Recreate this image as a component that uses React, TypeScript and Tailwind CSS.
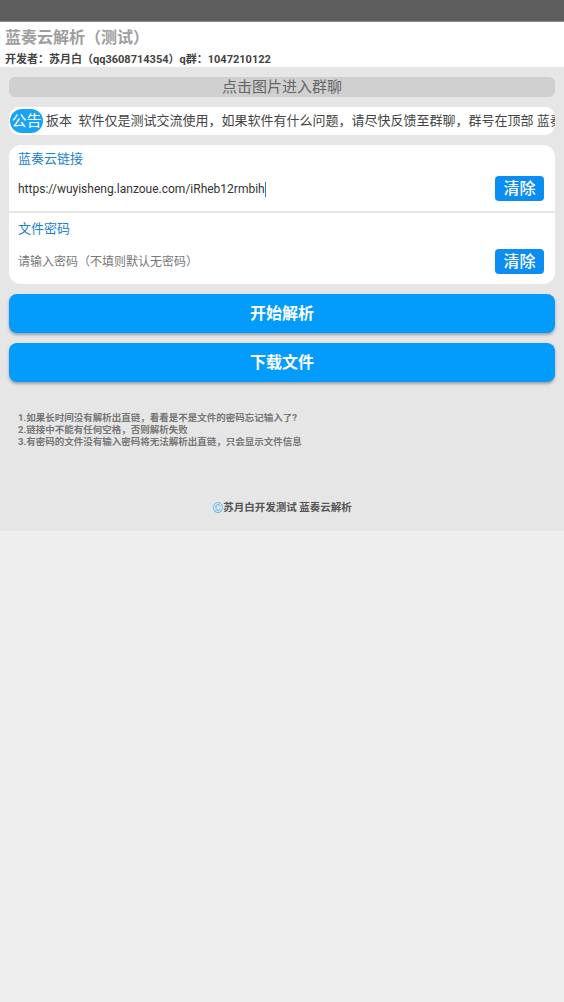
export default function App() {
  const font = { fontFamily: '"Roboto", "Noto Sans CJK SC", sans-serif' }
  return (
    <div className="min-h-[1002px] w-[564px] bg-[#eeeeee]" style={font}>
      {/* status bar */}
      <div className="h-[22px] bg-[#5e5e5e] border-b border-[#8a8a8a]" />

      {/* header */}
      <div className="bg-white px-[5px] pt-[5px]">
        <div className="text-[16px] leading-[22px] font-bold text-[#9e9e9e]">蓝奏云解析（测试）</div>
        <div className="mt-[3px] text-[11px] leading-[15px] font-bold text-[#444444]">开发者：苏月白（qq3608714354）q群：1047210122</div>
      </div>

      {/* main */}
      <div className="bg-[#e6e6e6] px-[9px] pt-[10px] h-[464px]">
        <div className="h-[20px] rounded-[6px] bg-[#d0d0d0] flex items-center justify-center text-[15px] text-[#666666]">
          点击图片进入群聊
        </div>

        {/* notice marquee */}
        <div className="mt-[10px] h-[28px] rounded-[10px] bg-white flex items-center overflow-hidden">
          <div className="ml-[1px] h-[24px] w-[33px] shrink-0 rounded-[12px] bg-[#1aa3f3] flex items-center justify-center text-[15px] text-white">
            公告
          </div>
          <div className="ml-[3px] whitespace-nowrap text-[13px] text-[#444444]">
            扳本&nbsp;&nbsp;软件仅是测试交流使用，如果软件有什么问题，请尽快反馈至群聊，群号在顶部 蓝奏云解析
          </div>
        </div>

        <div className="mt-[10px] rounded-[12px] bg-white overflow-hidden">
          <div className="px-[9px] pt-[6px] pb-[10px]">
            <div className="text-[13px] leading-[16px] text-[#1a80d2]">蓝奏云链接</div>
            <div className="mt-[9px] flex items-center justify-between pr-[2px]">
              <div className="text-[12px] text-[#333333]">
                https://wuyisheng.lanzoue.com/iRheb12rmbih<span className="inline-block w-[1px] h-[15px] bg-[#1a80d2] align-middle" />
              </div>
              <div className="h-[25px] w-[49px] rounded-[4px] bg-[#0c8df1] flex items-center justify-center text-[16px] font-medium text-white">清除</div>
            </div>
          </div>
          <div className="h-[2px] bg-[#e6e6e6]" />
          <div className="px-[9px] pt-[8px] pb-[10px]">
            <div className="text-[13px] leading-[16px] text-[#1a80d2]">文件密码</div>
            <div className="mt-[12px] flex items-center justify-between pr-[2px]">
              <div className="text-[12px] text-[#777777]">请输入密码（不填则默认无密码）</div>
              <div className="h-[25px] w-[49px] rounded-[4px] bg-[#0c8df1] flex items-center justify-center text-[16px] font-medium text-white">清除</div>
            </div>
          </div>
        </div>

        <div className="mt-[10px] h-[39px] rounded-[8px] bg-[#039cfc] shadow-[0_2px_3px_rgba(0,0,0,0.3)] flex items-center justify-center text-[16px] font-bold text-white">
          开始解析
        </div>
        <div className="mt-[10px] h-[39px] rounded-[8px] bg-[#039cfc] shadow-[0_2px_3px_rgba(0,0,0,0.3)] flex items-center justify-center text-[16px] font-bold text-white">
          下载文件
        </div>

        <div className="mt-[30px] pl-[9px] text-[9.5px] leading-[12px] font-bold text-[#777777]">
          <div>1.如果长时间没有解析出直链，看看是不是文件的密码忘记输入了?</div>
          <div>2.链接中不能有任何空格，否则解析失败</div>
          <div>3.有密码的文件没有输入密码将无法解析出直链，只会显示文件信息</div>
        </div>

        <div className="mt-[52px] flex items-center justify-center text-[10.5px] font-bold text-[#555555]">
          <span className="text-[#5bc0f0] text-[14px] leading-[14px] font-normal">©</span>
          <span>苏月白开发测试 蓝奏云解析</span>
        </div>
      </div>
    </div>
  )
}
